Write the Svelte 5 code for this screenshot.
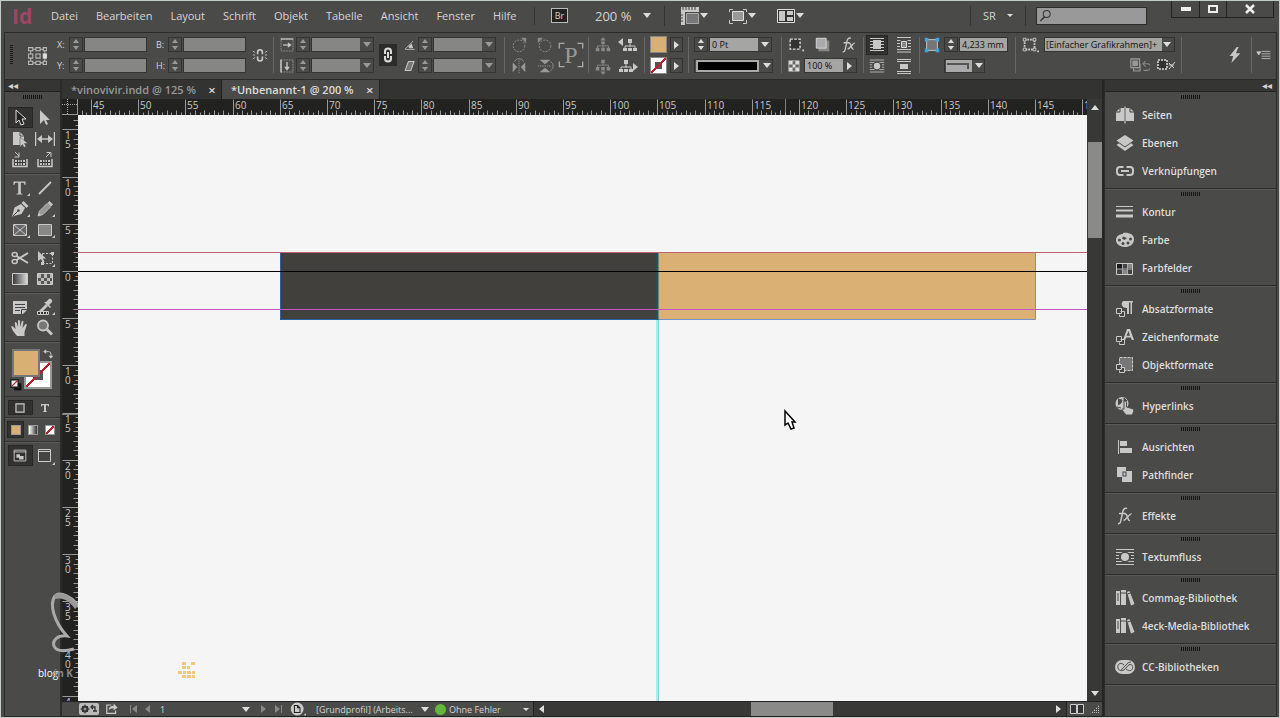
<script>
    const menus = ['Datei', 'Bearbeiten', 'Layout', 'Schrift', 'Objekt', 'Tabelle', 'Ansicht', 'Fenster', 'Hilfe'];

    const documents = [
        {name: '*vinovivir.indd @ 125 %', active: false},
        {name: '*Unbenannt-1 @ 200 %', active: true}
    ];

    const toolGroups = [
        [
            ['select', 'Auswahl'], ['direct', 'Direktauswahl'],
            ['page', 'Seite'], ['gap', 'Lücke'],
            ['collect', 'Inhaltsaufnahme'], ['place', 'Inhaltsplatzierung']
        ],
        [
            ['type', 'Text'], ['line', 'Linie'],
            ['pen', 'Zeichenstift'], ['pencil', 'Buntstift'],
            ['frame', 'Rechteckrahmen'], ['rect', 'Rechteck']
        ],
        [
            ['scissors', 'Schere'], ['transform', 'Frei transformieren'],
            ['gradient', 'Verlaufsfarbfeld'], ['feather', 'Weiche Verlaufskante']
        ],
        [
            ['note', 'Notiz'], ['dropper', 'Pipette'],
            ['hand', 'Hand'], ['zoom', 'Zoom']
        ]
    ];

    const panelGroups = [
        [['pages', 'Seiten'], ['layers', 'Ebenen'], ['links', 'Verknüpfungen']],
        [['stroke', 'Kontur'], ['palette', 'Farbe'], ['swatches', 'Farbfelder']],
        [['paragraph', 'Absatzformate'], ['character', 'Zeichenformate'], ['object', 'Objektformate']],
        [['hyperlink', 'Hyperlinks']],
        [['align', 'Ausrichten'], ['pathfinder', 'Pathfinder']],
        [['effects', 'Effekte']],
        [['textwrap', 'Textumfluss']],
        [['library', 'Commag-Bibliothek'], ['library', '4eck-Media-Bibliothek']],
        [['cloud', 'CC-Bibliotheken']]
    ];

    // Shapes are drawn on a 20 x 20 grid, one unit is one pixel
    const icons = {
        select: '<path d="M6 2v13l3-3 2 5 3-1-2-5h4z" fill="#222" stroke="#ddd"/>',
        direct: '<path d="M5 2v14l4-4 2 5 2-1-2-4h4z"/>',
        page: '<path d="M3 3h7l4 4v4l-4-4v9H3z"/><path d="M3 3h7v4h4v4l-3 5H3z"/><path d="M10 3v4h4" fill="none" stroke="#555"/><path d="M10 8v10l2.500-2.500 1.500 3 2-1-1.500-3H18z" stroke="#4a4a48" stroke-width=".5"/>',
        gap: '<path d="M0.500 3v14M19.500 3v14M4 10h12" fill="none" stroke="currentColor" stroke-width="1.500"/><path d="M2 10l5-4v8zM18 10l-5-4v8z"/>',
        collect: '<path d="M3 9v7.500h14V9" fill="none" stroke="currentColor" stroke-width="1.500"/><path d="M5 10h10v5H5z"/><path d="M5 12.500h10M7.500 10v5M10 10v5M12.500 10v5" stroke="#333"/><path d="M5 2l4 4M9 2.500V7H4.500" stroke="currentColor" fill="none"/>',
        place: '<path d="M3 9v7.500h14V9" fill="none" stroke="currentColor" stroke-width="1.500"/><path d="M5 10h10v5H5z"/><path d="M5 12.500h10M7.500 10v5M10 10v5M12.500 10v5" stroke="#333"/><path d="M11 7l4-4M11.500 2.500H16V7" stroke="currentColor" fill="none"/>',
        type: '<path d="M3.500 3.500h12V7h-.8c-.3-1.700-.9-2.300-2.500-2.300h-1.400v9.600c0 1.200.4 1.400 1.700 1.500v.7h-6v-.7c1.300-.1 1.700-.3 1.700-1.500V4.700H6.800c-1.600 0-2.200.6-2.500 2.300h-.8z"/><path d="M20 15v3h-3z"/>',
        typeBold: '<path d="M2 2h16v5h-1.500c-.4-1.800-1-2.500-3-2.500h-1.500v10.500c0 1.500.5 1.800 2.200 2V18H5.800v-1c1.700-.2 2.200-.5 2.200-2V4.500H6.500c-2 0-2.600.7-3 2.500H2z"/>',
        line: '<path d="M4 16L16 4" stroke="currentColor" stroke-width="1.800"/>',
        pen: '<path d="M2 17.500l2.500-9L11 5l4 4-3.500 6z"/><path d="M11.500 4l2-2 5 5-2 2z"/><path d="M3 17l5-5" stroke="#444"/><circle cx="8.500" cy="11.500" r="1.300" fill="#444"/><path d="M20 15v3h-3z"/>',
        pencil: '<path d="M3 17l1.500-5L12 4.500l3.500 3.500L8 15.500z" fill="#999" stroke="#bbb"/><path d="M12.500 4l2-2 3.500 3.500-2 2zM3 17l1-3 2 2z"/><path d="M20 15v3h-3z"/>',
        frame: '<path d="M3.500 4.500h13v11h-13zM4 5l12 10M16 5L4 15" fill="#666" stroke="currentColor"/><path d="M20 15v3h-3z"/>',
        rect: '<path d="M3.500 4.500h13v11h-13z" fill="#888" stroke="currentColor"/><path d="M20 15v3h-3z"/>',
        scissors: '<path d="M18 5L6.500 12M18 15L6.500 8" stroke="currentColor" stroke-width="2"/><ellipse cx="4.700" cy="6.500" rx="2.500" ry="2" fill="none" stroke="currentColor" stroke-width="1.500"/><ellipse cx="4.700" cy="13.500" rx="2.500" ry="2" fill="none" stroke="currentColor" stroke-width="1.500"/>',
        transform: '<path d="M7.500 5.500h10v10h-10z" fill="none" stroke="currentColor" stroke-dasharray="2 1.500"/><path d="M16 4h3v3h-3zM6 14h3v3H6z"/><path d="M3 3v10l3-2 2 4 1.500-1L8 10.500h3z"/><path d="M20 16v3h-3z"/>',
        gradient: '<defs><linearGradient id="g1"><stop stop-color="#333"/><stop offset="1" stop-color="#ddd"/></linearGradient></defs><path d="M2.500 4.500h15v11h-15z" fill="url(#g1)" stroke="#ccc"/>',
        feather: '<path d="M2.500 4.500h15v11h-15z" fill="#555" stroke="#ccc"/><path d="M3 5h3v4H3zM9 5h3v4H9zM15 5h2v4h-2zM6 9h3v3H6zM12 9h3v3h-3zM3 12h3v3H3zM9 12h3v3H9zM15 12h2v3h-2z" fill="#bbb"/>',
        note: '<path d="M3 4h14v9l-4 4H3z"/><path d="M5 7.500h10M5 10.500h10M5 13.500h5M11.500 17v-4.500H17" stroke="#444" fill="none"/>',
        dropper: '<path d="M4 14l7-7 2 2-7 7H4z"/><path d="M9 5l6 6 1-1-2-2 3-3c1-1-1-4-3-3l-3 3z"/><path d="M2.500 14.500h11v3h-11zM5.500 14v4M8.500 14v4M11.500 14v4" fill="#333" stroke="#ccc"/><path d="M20 15v3h-3z"/>',
        hand: '<path d="M7 18l-4-5-1.800-4c0-1 1.300-1.300 2-.3L5.500 11 4.800 5c0-1.200 1.500-1.200 1.800-.2L8 9V3c0-1.300 1.800-1.300 2 0v6l1.700-5.500c.4-1.200 1.900-.8 1.700.4L12.500 10l2.600-3.600c.8-1 2-.3 1.600.8L14.500 14v4z"/>',
        zoom: '<circle cx="8" cy="7.500" r="5" fill="#777" stroke="currentColor" stroke-width="1.800"/><path d="M12 11.500l5 5" stroke="currentColor" stroke-width="3"/>',

        pages: '<path d="M1 7l4-4h4v13H1zM11 3h4l4 4v9h-8z"/><path d="M1 7h4V3M15 3v4h4" fill="none" stroke="#444"/><path d="M10 1.500v17" stroke="currentColor" stroke-width="1.200"/>',
        layers: '<path d="M10 2l8.500 5.500-8.500 6-8.500-6z"/><path d="M1.500 12L4 10.300l6 4.200 6-4.200 2.500 1.700-8.500 6z"/>',
        links: '<path d="M8.500 6H5a3 3 0 0 0-3 3v2a3 3 0 0 0 3 3h3.500M11.500 6H15a3 3 0 0 1 3 3v2a3 3 0 0 1-3 3h-3.500M6 10h8" fill="none" stroke="currentColor" stroke-width="2"/>',
        stroke: '<path d="M1 4h17v1H1zM1 7.500h17v2H1zM1 12.500h17v3H1z"/>',
        palette: '<path d="M1 10C1 6 5 4 8 4V3c5-1 11 1 11 6 0 6-5 8-9 8-5 0-9-3-9-7z"/><g fill="#4a4a48"><circle cx="4.500" cy="10" r="1.500"/><circle cx="8" cy="13.500" r="1.500"/><circle cx="13" cy="13" r="1.500"/><circle cx="15.500" cy="9" r="1.500"/><path d="M8 6.500l4 1.500-2.500 2-2.500-1.500z"/></g>',
        swatches: '<path d="M1.500 5.500h16v11h-16z" fill="#444" stroke="#ccc"/><path d="M2 6h5v5H2z" fill="#1d1a1c"/><path d="M8 12h4v4H8zM13 6h4v4h-4z" fill="#888"/><path d="M7.500 6v10M12.500 6v10M2 11h15" stroke="#aaa"/>',
        paragraph: '<path d="M9 2h9v1.500h-1V15h-1.500V3.500H14V15h-2V9C5 9 6 2 9 2z"/><path d="M5.500 12.500h4v5h-5v-2M1.500 9.500h5v5h-5z" fill="#444" stroke="#ccc"/>',
        character: '<path d="M8 13l4-11h3l4 11h-2.300l-.8-2.500h-4.800L10.300 13zm3.600-4.200h3.300L13.500 4z" fill-rule="evenodd"/><path d="M5.500 12.500h4v5h-5v-2M1.500 9.500h5v5h-5z" fill="#444" stroke="#ccc"/>',
        object: '<path d="M4.500 2.500h13v13h-13z" fill="#777" stroke="#ccc" stroke-dasharray="3 1"/><path d="M5.500 12.500h4v5h-5v-2M1.500 9.500h5v5h-5z" fill="#444" stroke="#ccc"/>',
        hyperlink: '<circle cx="7" cy="7.500" r="6.500"/><path d="M3 3l4 1-1 3-3 2M9 2l3 3-3 2zM2 11l4 1" stroke="#4a4a48" fill="#4a4a48"/><path d="M10 5c1.300 0 1.500.7 1.500 1.500V11l5.500 1.500c1.500.5 2 1.500 1.500 3L17.500 19H11l-4-5c0-1.500 1-1.500 2-.7V6.500C9 5.700 9.200 5 10 5z" stroke="#4a4a48"/>',
        align: '<path d="M3 3h1v14H3zM5 4h7v5H5zM5 11h12v5H5z"/>',
        pathfinder: '<path d="M2 2h9v4h6v11H7v-5H2z"/><path d="M7.500 6.500h4v5h-4z" fill="#444"/><path d="M8.500 7.500h2v3h-2z"/>',
        effects: '<path d="M12 2.500C9 1.500 8 4 7.500 7L6 14c-.5 3-1.500 4-3 3.500M4 7.500h6.500M9.500 8c3-1.500 3 7.500 5.500 6.500M16.500 8c-2-1-4.500 5.500-8 6.500" fill="none" stroke="currentColor" stroke-width="1.500"/>',
        textwrap: '<path d="M1 2.500h18M1 5.500h18M1 8.500h3M1 11.500h3M16 8.500h3M16 11.500h3M1 14.500h18M1 17.500h18" stroke="currentColor"/><circle cx="10" cy="10" r="5.500" fill="#4a4a48"/><circle cx="10" cy="10" r="4"/>',
        library: '<path d="M1 3h4v14H1zM6 2h5v15H6zM12 4l2.500-1L19.500 16l-3.500 1.500z"/><path d="M3 5v8M6 5h5M12.500 6l3-1" stroke="#4a4a48"/>',
        cloud: '<rect x="0" y="3" width="20" height="14" rx="7" ry="7"/><path d="M9 8C5 4 2 8 3 11c1 4 6 3 8 0l2-2.500c3-2.500 5.500 0 4.500 3-1 3-4.500 2.500-6.500.5M6 13l6-6c1-1.500 2.500-2 4-2" fill="none" stroke="#4a4a48"/>',

        reference: '<path d="M1.500 2.500h4v3h-4zM8.500 2.500h4v3h-4zM15.500 2.500h3v3h-3zM1.500 8.500h4v4h-4zM8.500 8.500h4v4h-4zM1.500 15.500h4v3h-4zM8.500 15.500h4v3h-4zM15.500 15.500h3v3h-3zM6 4h2M13 4h2M6 17h2M13 17h2M3.500 6v2M3.500 13v2M17 6v2M17 13v2" fill="none" stroke="#bbb"/><path d="M15 8h4v5h-4z" fill="#ddd"/>',
        unlink: '<path d="M7 9V6.500a3 3 0 0 1 6 0V9M7 12v2.500a3 3 0 0 0 6 0V12" fill="none" stroke="#ccc" stroke-width="2"/><path d="M1 5l3 2M1 10h3M1 15l3-2M19 5l-3 2M19 10h-3M19 15l-3-2" stroke="#ccc"/>',
        link: '<path d="M7 9V6.500a3 3 0 0 1 6 0V9M7 11v2.500a3 3 0 0 0 6 0V11M10 7v6" fill="none" stroke="#ddd" stroke-width="2"/>',
        scaleX: '<path d="M2.500 2.500h15v15h-15z" fill="none" stroke="#bbb" stroke-dasharray="1 1"/><path d="M2 2.500h16M5 10h7" stroke="#ddd" stroke-width="1.500"/><path d="M11 6.500l5 3.500-5 3.500z"/>',
        scaleY: '<path d="M2.500 2.500h15v15h-15z" fill="none" stroke="#bbb" stroke-dasharray="1 1"/><path d="M2.500 2v16M10 5v7" stroke="#ddd" stroke-width="1.500"/><path d="M6.500 11l3.500 5 3.500-5z"/>',
        angle: '<path d="M4 15.500h12M4 15L14 5" stroke="currentColor"/><path d="M8 12l4-4 2 6H9z"/>',
        shear: '<path d="M8 4.500h7l-4 11H4z" fill="#777" stroke="currentColor" stroke-width="1.300"/>',
        rotateCw: '<circle cx="10" cy="11" r="6.500" fill="none" stroke="#999" stroke-dasharray="2 1.500"/><path d="M12 2h6v6z" fill="#888"/>',
        rotateCcw: '<circle cx="10" cy="11" r="6.500" fill="none" stroke="#999" stroke-dasharray="2 1.500"/><path d="M8 2H2v6z" fill="#888"/>',
        flipH: '<path d="M10 4v14" stroke="#999" stroke-dasharray="1.500 1"/><path d="M3 6l5 5-5 6zM17 6l-5 5 5 6z" fill="#999"/><path d="M5 5c2-4 8-4 10 0" fill="none" stroke="#999"/>',
        flipV: '<path d="M2 10h14" stroke="#999" stroke-dasharray="1.500 1"/><path d="M4 3h12l-6 5zM4 17h12l-6-5z" fill="#999"/><path d="M16 5c4 2 4 8 0 10" fill="none" stroke="#999"/>',
        paragraphBox: '<path d="M1 5V1h4M15 1h4v4M1 15v4h4M15 19h4v-4" fill="none" stroke="#aaa"/>',
        treeUp: '<path d="M10 5v6M4 14v-3h12v3M10 11v3" fill="none" stroke="#888"/><path d="M7 5l3-4 3 4zM8 6h4v3H8zM2 13h4v4H2zM8 13h4v4H8zM14 13h4v4h-4z" fill="#888"/>',
        treeDown: '<path d="M10 5v5M4 12V9h12v3" fill="none" stroke="#888"/><path d="M7 16l3 4 3-4zM8 3h4v4H8zM2 11h4v4H2zM8 11h4v4H8zM14 11h4v4h-4z" fill="#888"/>',
        treeLeft: '<path d="M12 6v6M7 14v-3h10v3" fill="none" stroke="currentColor"/><path d="M0 7l5-4v8zM10 4h4v4h-4zM5 13h4v3H5zM10 13h4v3h-4zM15 13h4v3h-4z"/>',
        treeRight: '<path d="M8 6v6M3 14v-3h10v3" fill="none" stroke="currentColor"/><path d="M20 11l-5-4v8zM6 4h4v4H6zM1 13h4v3H1zM6 13h4v3H6zM11 13h4v3h-4z"/>',
        crop: '<path d="M3.500 3.500h11v11h-11z" fill="#333" stroke="#ddd" stroke-dasharray="3 1.500" stroke-width="1.500"/><path d="M17 15h2v2h-2z"/>',
        shadow: '<path d="M5 5h12v12H5z" fill="#888"/><path d="M2.500 2.500h11v11h-11z" fill="#aaa" stroke="#ddd"/>',
        opacity: '<path d="M2.500 2.500h15v15h-15z" fill="#666" stroke="#ccc"/><path d="M3 3h5v5H3zM12 3h5v5h-5zM8 8h4v4H8zM3 12h5v5H3zM12 12h5v5h-5z" fill="#ddd"/>',
        wrapNone: '<path d="M3 3.500h14M3 6.500h14M3 9.500h14M3 12.500h14M3 15.500h14" stroke="currentColor"/><path d="M6 5h8v9H6z"/>',
        wrapBox: '<path d="M3 2.500h14M3 5.500h14M3 8.500h3M3 11.500h3M14 8.500h3M14 11.500h3M3 14.500h14M3 17h14" stroke="currentColor"/><path d="M6.500 5h7v9h-7z" fill="#4a4a48"/><path d="M7.500 6.500h5v6h-5z" fill="#888" stroke="#ddd"/>',
        wrapJump: '<path d="M3 3.500h14M3 5.500h14M3 15.500h14M3 17.500h14" stroke="currentColor"/><path d="M6 8h8v5H6z"/>',
        corners: '<path d="M4 4h12v12H4z" fill="#777" stroke="#ccc"/><path d="M2 2h4v4H2zM14 2h4v4h-4zM2 14h4v4H2zM14 14h4v4h-4z" fill="#3fa3df"/>',
        styles: '<path d="M4 4h11v11H4z" fill="none" stroke="#ccc" stroke-width="2" stroke-dasharray="2 1"/><path d="M2.500 2.500h3v3h-3zM13.500 2.500h3v3h-3zM2.500 13.500h3v3h-3zM13.500 13.500h3v3h-3z" fill="#4a4a48" stroke="#ccc"/><path d="M18 16h2v2h-2z"/>',
        clear: '<path d="M2.500 3.500h8v8h-8zM5 12v2.500h6V8" fill="#555" stroke="#999"/><path d="M4 5h5v5H4z" fill="#999"/><path d="M14 8h3.500a2 2 0 0 1 0 6H14M16 5.500L13.500 8l2.500 2.500" fill="none" stroke="#888"/>',
        redefine: '<path d="M2 5h9v9H2z" fill="#333" stroke="#ddd" stroke-width="1.500" stroke-dasharray="2 1"/><path d="M13 14l6-7M13 8l5 5M13 10h5" stroke="#ccc"/>',
        bolt: '<path d="M12 1L4 11h4l-2 8 10-11h-5l3-7z"/>',
        flyout: '<path d="M1 6h5l-2.500 4zM7 5.500h11M7 8.500h11M7 11.500h11M7 14.500h11" stroke="currentColor" stroke-width="1"/>',
        rulers: '<path d="M1 1h18v5H1zM1 6h4v13H1z"/><path d="M3 1v3M6 1v3M9 1v3M12 1v3M15 1v3M1 9h2M1 12h2M1 15h2" stroke="#444"/><path d="M6.500 7.500h12v10h-12z" fill="#777" stroke="#aaa"/>',
        screen: '<path d="M1.500 6V3.500H5M15 3.500h3.500V6M1.500 14v3.500H5M15 17.500h3.500V14" stroke="currentColor" fill="none"/><path d="M4.500 5.500h11v9h-11z" fill="#999" stroke="#ddd"/>',
        arrange: '<path d="M1.500 3.500h17v13h-17z" fill="#333" stroke="#ddd"/><path d="M3 5h6v10H3zM11 5h6v4h-6zM11 11h6v4h-6z"/>',
        preflight: '<rect x="0" y="4" width="20" height="12" rx="2" fill="#bbb"/><circle cx="6" cy="10" r="2.500" fill="none" stroke="#333" stroke-width="2"/><path d="M6 5.500v9M1.500 10h9M3 7l6 6M9 7l-6 6" stroke="#333"/><circle cx="6" cy="10" r="1" fill="#bbb"/><path d="M12 8h4v4M14 6l-2 2 2 2M18 12h-4" fill="none" stroke="#333" stroke-width="1.300"/>',
        share: '<path d="M9 5H3.500v10.500h11V12" fill="none" stroke="#ccc" stroke-width="1.500"/><path d="M6 12c0-5 3-6 6-6V3l5 5-5 4V9c-3 0-5 1-6 3z"/>',
        file: '<circle cx="9" cy="10" r="8" fill="#ccc"/><path d="M5.500 5.500h4l3 3v6h-7zM9.500 5.500v3h3" fill="#ccc" stroke="#222" stroke-width="1.300"/><path d="M18 16h2v2h-2z"/>',
        spread: '<path d="M3.500 5.500h6v9h-6zM10.500 5.500h6v9h-6z" fill="#333" stroke="#ccc"/>',
        swap: '<path d="M5 6h6a4 4 0 0 1 4 4v4" fill="none" stroke="currentColor" stroke-width="1.500"/><path d="M2 6l5-4v8zM11 13h8l-4 5z"/>',
        defaults: '<path d="M7 7h12v12H7z" fill="#111"/><path d="M11 11h4v4h-4z" fill="#4a4a48"/><path d="M1.500 1.500h12v12h-12z" fill="#eee" stroke="#111" stroke-width="2"/><path d="M3 12l9-9" stroke="#b9202b" stroke-width="2"/>',
        preview: '<path d="M3.500 3.500h13v12h-13z" fill="#333" stroke="#ccc"/><path d="M3 5.500h14" stroke="#ccc"/><path d="M6 8h4v4H6zM9 10h5v4H9z"/>',
        screenMode: '<path d="M3.500 3.500h12v12h-12z" fill="#444" stroke="#ccc"/><path d="M3 5.500h13" stroke="#ccc"/><path d="M20 16v3h-3z"/>',
        container: '<path d="M5.500 5.500h9v9h-9z" fill="#444" stroke="#ccc" stroke-width="1.300"/>',
        search: '<circle cx="11" cy="7" r="5" fill="none" stroke="#333" stroke-width="1.500"/><path d="M8 11l-6 6" stroke="#333" stroke-width="2"/>'
    };

    // Distance between two millimetres on the rulers at 200 %
    const step = 9.44;

    const makeTicks = (from, to, offset) => {
        const ticks = [];
        for (let half = from * 2; half <= to * 2; half++) {
            const value = half / 2;
            ticks.push({
                value,
                at: Math.round(offset + value * step),
                major: value % 5 === 0,
                whole: value % 1 === 0
            });
        }
        return ticks;
    }

    const columnTicks = makeTicks(44, 151, 13 - 45 * step);
    const rowTicks = makeTicks(-16, 46, 156);

    let activeTool = 'select';
    let stylePreset = '[Einfacher Grafikrahmen]+';
    let pageNumber = '1';

    const handleTool = (name) => {
        activeTool = name;
    }
</script>

{#snippet icon(name, size = 18)}
    <svg class="icon" width={size} height={size} viewBox="0 0 20 20" fill="currentColor" aria-hidden="true">{@html icons[name]}</svg>
{/snippet}

{#snippet spinner()}
    <span class="spinner">
        <button type="button" aria-label="Erhöhen"><i class="up"></i></button>
        <button type="button" aria-label="Verringern"><i class="down"></i></button>
    </span>
{/snippet}

{#snippet combo(label)}
    <span class="combo off">
        <input aria-label={label} />
        <button type="button" aria-label="{label} auswählen"><i class="down"></i></button>
    </span>
{/snippet}

<div class="app">
    <header class="menubar">
        <span class="logo">Id</span>
        <nav>
            {#each menus as menu}
                <button type="button">{menu}</button>
            {/each}
        </nav>
        <div class="apptools">
            <button type="button" class="bridge">Br</button>
            <button type="button" class="zoomlevel">200 % <i class="down"></i></button>
        </div>
        <div class="views">
            <button type="button" aria-label="Anzeigeoptionen">{@render icon('rulers', 20)}<i class="down"></i></button>
            <button type="button" aria-label="Bildschirmmodus">{@render icon('screen', 20)}<i class="down"></i></button>
            <button type="button" aria-label="Dokumente anordnen">{@render icon('arrange', 20)}<i class="down"></i></button>
        </div>
        <button type="button" class="workspace-name">SR <i class="down small"></i></button>
        <label class="search">
            {@render icon('search', 14)}
            <input type="search" aria-label="Suche" />
        </label>
        <div class="window-buttons">
            <button type="button" aria-label="Minimieren"><i class="min"></i></button>
            <button type="button" aria-label="Maximieren"><i class="max"></i></button>
            <button type="button" aria-label="Schließen">
                <svg width="12" height="10" viewBox="0 0 12 10"><path d="M2 1l8 8M10 1L2 9" stroke="#eee" stroke-width="2.500" /></svg>
            </button>
        </div>
    </header>

    <section class="control">
        <div class="group position">
            <i class="vgrip tall"></i>
            <span class="tall refpoint">{@render icon('reference', 21)}</span>
            <label for="x">X:</label>{@render spinner()}<input id="x" class="off" />
            <label for="b">B:</label>{@render spinner()}<input id="b" class="off" />
            <span class="tall unlinked">{@render icon('unlink', 16)}</span>
            <label for="y">Y:</label>{@render spinner()}<input id="y" class="off" />
            <label for="h">H:</label>{@render spinner()}<input id="h" class="off" />
        </div>
        <div class="group scale">
            {@render icon('scaleX', 16)}{@render spinner()}{@render combo('Skalierung X')}
            <button type="button" class="tall chain" aria-label="Proportionen beibehalten">{@render icon('link', 20)}</button>
            {@render icon('angle', 16)}{@render spinner()}{@render combo('Drehwinkel')}
            {@render icon('scaleY', 16)}{@render spinner()}{@render combo('Skalierung Y')}
            {@render icon('shear', 16)}{@render spinner()}{@render combo('Scherwinkel')}
        </div>
        <div class="group rotate">
            {@render icon('rotateCw')}{@render icon('rotateCcw')}
            <span class="tall letter">P{@render icon('paragraphBox', 26)}</span>
            {@render icon('flipH')}{@render icon('flipV')}
        </div>
        <div class="group tree">
            {@render icon('treeUp')}{@render icon('treeLeft', 20)}
            {@render icon('treeDown')}{@render icon('treeRight', 20)}
        </div>
        <div class="group paint">
            <i class="swatch tan"></i><button type="button" class="step" aria-label="Fläche"><i class="right"></i></button>
            <i class="swatch none hollow"></i><button type="button" class="step" aria-label="Kontur"><i class="right"></i></button>
        </div>
        <div class="group weight">
            {@render spinner()}
            <span class="combo"><input aria-label="Konturstärke" value="0 Pt" /><button type="button" aria-label="Konturstärke auswählen"><i class="down"></i></button></span>
            <button type="button" class="linestyle" aria-label="Konturtyp"><b></b><i class="down"></i></button>
        </div>
        <div class="group effects">
            {@render icon('crop')}{@render icon('shadow')}{@render icon('effects')}
            <span class="opacity">
                {@render icon('opacity', 14)}
                <span class="combo"><input aria-label="Deckkraft" value="100 %" /><button type="button" aria-label="Deckkraft auswählen"><i class="right"></i></button></span>
            </span>
        </div>
        <div class="group wrap">
            <button type="button" class="pressed" aria-label="Kein Textumfluss">{@render icon('wrapNone', 20)}</button>{@render icon('wrapBox', 20)}
            <span class="center">{@render icon('textwrap', 16)}</span>{@render icon('wrapJump', 20)}
        </div>
        <div class="group corner">
            {@render icon('corners')}{@render spinner()}<input aria-label="Eckengröße" value="4,233 mm" />
            <button type="button" class="cornerstyle" aria-label="Eckenform"><b></b><i class="down"></i></button>
        </div>
        <div class="group style">
            {@render icon('styles')}
            <span class="combo">
                <select bind:value={stylePreset} aria-label="Objektformat">
                    <option>[Einfacher Grafikrahmen]+</option>
                    <option>[Einfacher Textrahmen]</option>
                </select>
                <i class="down"></i>
            </span>
            <span class="style-actions">{@render icon('clear', 22)}{@render icon('redefine', 20)}</span>
        </div>
        <div class="group quick">{@render icon('bolt', 18)}</div>
        <button type="button" class="flyout" aria-label="Bedienfeldmenü">{@render icon('flyout', 16)}</button>
    </section>

    <main>
        <aside class="toolbox">
            <div class="collapse">◂◂</div>
            <i class="grip"></i>
            {#each toolGroups as group}
                <div class="tools">
                    {#each group as [name, label]}
                        <button type="button" class:pressed={activeTool === name} aria-label={label} on:click={() => handleTool(name)}>
                            {@render icon(name, 20)}
                        </button>
                    {/each}
                </div>
            {/each}
            <div class="colors">
                <i class="stroke-color"></i>
                <i class="fill-color"></i>
                <button type="button" class="swap" aria-label="Fläche und Kontur austauschen">{@render icon('swap', 12)}</button>
                <button type="button" class="default" aria-label="Standardfläche und -kontur">{@render icon('defaults', 12)}</button>
            </div>
            <div class="tools low">
                <button type="button" class="pressed" aria-label="Formatierung wirkt sich auf Rahmen aus">{@render icon('container')}</button>
                <button type="button" aria-label="Formatierung wirkt sich auf Text aus">{@render icon('typeBold', 10)}</button>
            </div>
            <div class="tools three">
                <button type="button" class="pressed" aria-label="Farbe anwenden"><i class="chip tan"></i></button>
                <button type="button" aria-label="Verlauf anwenden"><i class="chip fade"></i></button>
                <button type="button" aria-label="Keine anwenden"><i class="chip none"></i></button>
            </div>
            <div class="tools modes">
                <button type="button" class="pressed" aria-label="Normal">{@render icon('preview')}</button>
                <button type="button" aria-label="Vorschau">{@render icon('screenMode', 20)}</button>
            </div>
        </aside>

        <section class="document">
            <div class="tabs">
                {#each documents as doc}
                    <div class="tab" class:active={doc.active}>
                        <button type="button">{doc.name}</button>
                        <button type="button" class="close" aria-label="Schließen">×</button>
                    </div>
                {/each}
            </div>

            <div class="view">
                <svg class="origin" width="16" height="16"><path d="M0 5.500h16M5.500 0v16" stroke="#aaa" stroke-dasharray="1 1" /><path d="M15.500 0v16M0 15.500h16" stroke="#999" /></svg>
                <svg class="ruler across">
                    {#each columnTicks as tick}
                        <line x1={tick.at} x2={tick.at} y1={tick.major ? 0 : tick.whole ? 11 : 13} y2="16" />
                        {#if tick.major}
                            <text x={tick.at + 2} y="10">{tick.value}</text>
                        {/if}
                    {/each}
                    <line class="marker" x1="707" x2="707" y1="0" y2="16" />
                </svg>
                <svg class="ruler down-ruler">
                    {#each rowTicks as tick}
                        <line y1={tick.at} y2={tick.at} x1={tick.major ? 0 : tick.whole ? 11 : 13} x2="16" />
                        {#if tick.major}
                            <text y={tick.at + 1}>
                                {#each String(Math.abs(tick.value)) as digit}<tspan x="3" dy="9">{digit}</tspan>{/each}
                            </text>
                        {/if}
                    {/each}
                    <line class="marker" x1="0" x2="16" y1="299" y2="299" />
                </svg>

                <svg class="canvas">
                    <rect x="202" y="137" width="378" height="68" fill="#42403c" />
                    <rect x="580" y="137" width="377" height="68" fill="#dab074" />
                    <path d="M202.500 137v67.500H580" fill="none" stroke="#2c5fa5" />
                    <path d="M580 204.500h377.500V137" fill="none" stroke="#7093c8" />
                    <path d="M579.500 137v68" stroke="#15596a" stroke-width="2" />
                    <rect x="578" y="205" width="3" height="100%" fill="#a4eeee" />
                    <rect x="580" y="205" width="1" height="100%" fill="#84d2d4" />
                    <rect y="137" width="100%" height="1" fill="#bd6270" />
                    <rect y="156" width="100%" height="1" fill="#000" />
                    <rect y="194" width="100%" height="1" fill="#c455c4" />
                    <g fill="#efc980">
                        <path d="M104 547h4v3h-4zM113 547h4v3h-4zM104 551h4v3h-4zM109 551h3v3h-3zM100 556h4v3h-4zM105 556h3v3h-3zM109 556h4v3h-4zM114 556h3v3h-3zM104 560h4v3h-4zM109 560h4v3h-4zM114 560h3v3h-3z" />
                    </g>
                    <path class="pointer" d="M707 296v14l3-2 3 6 3-1-2-6h3z" fill="#fff" stroke="#000" stroke-width="1.500" />
                </svg>

                <div class="vscroll">
                    <i class="up"></i>
                    <b></b>
                    <i class="down"></i>
                </div>
            </div>

            <footer>
                {@render icon('preflight', 20)}
                {@render icon('share', 16)}
                <button type="button" class="dim" aria-label="Erste Seite"><i class="bar"></i><i class="left"></i></button>
                <button type="button" class="dim" aria-label="Vorherige Seite"><i class="left"></i></button>
                <span class="pagefield">
                    <input bind:value={pageNumber} aria-label="Seite" />
                    <i class="down"></i>
                </span>
                <button type="button" class="dim" aria-label="Nächste Seite"><i class="right"></i></button>
                <button type="button" class="dim" aria-label="Letzte Seite"><i class="right"></i><i class="bar"></i></button>
                {@render icon('file', 16)}
                <button type="button" class="profile"><span>[Grundprofil] (Arbeits...</span><i class="down"></i></button>
                <button type="button" class="errors"><i class="dot"></i><span>Ohne Fehler</span><i class="down small"></i></button>
                <div class="hscroll">
                    <i class="left"></i>
                    <b></b>
                    <i class="right"></i>
                </div>
                <span class="corner-end">{@render icon('spread', 20)}<i class="resize"></i></span>
            </footer>

            <div class="watermark">
                <svg width="40" height="76" viewBox="0 0 40 76"><path d="M41 17C35 7 22 1 17 6c-6 8-1 26 12 40C20 45 14 50 16 56c2 5 9 6 20 3" fill="none" stroke="#aaa" stroke-width="3" /><path d="M16 5c8-4 17 1 24 11l-3 3C31 10 24 7 17 9z" fill="#999" /></svg>
                <span class="blog">blog</span><span class="town">in K</span>
            </div>
        </section>

        <aside class="dock">
            <div class="collapse end">◂◂</div>
            {#each panelGroups as group}
                <div class="panels">
                    <i class="grip"></i>
                    {#each group as [name, label]}
                        <button type="button">{@render icon(name, 20)}<span>{label}</span></button>
                    {/each}
                </div>
            {/each}
        </aside>
    </main>
</div>

<style>
    :global(body) {
        background: #4a4a48;
    }

    .app {
        box-sizing: border-box;
        height: 100vh;
        display: flex;
        flex-direction: column;
        padding: 0 2px 0 3px;
        border: 1px solid #c4ccc8;
        background: #4a4a48;
        color: #d4d4d4;
        font-family: "Open Sans", "Noto Sans", sans-serif;
        font-size: 11px;
        overflow: hidden;
    }

    .app :global(*) {
        box-sizing: border-box;
    }

    button, input, select {
        font: inherit;
        color: inherit;
        background: none;
        border: 0;
        padding: 0;
        margin: 0;
        min-width: 0;
        border-radius: 0;
        appearance: none;
        outline: 0;
    }

    button {
        display: flex;
        align-items: center;
        justify-content: center;
        white-space: nowrap;
    }

    .icon {
        display: block;
        flex: none;
        color: #c8c8c8;
    }

    /* Triangles */
    .up, .down, .left, .right {
        flex: none;
        width: 0;
        height: 0;
        border: 4px solid transparent;
    }

    .up {
        border-top: 0;
        border-bottom: 5px solid #ddd;
    }

    .down {
        border-bottom: 0;
        border-top: 5px solid #ddd;
    }

    .left {
        border-left: 0;
        border-right: 5px solid #ddd;
    }

    .right {
        border-right: 0;
        border-left: 5px solid #ddd;
    }

    .small {
        border-width: 3px 3px 0;
    }

    /* Menu bar */
    .menubar {
        flex: none;
        display: flex;
        align-items: center;
        height: 31px;
        padding: 0 0 2px 8px;
    }

    .logo {
        width: 39px;
        color: #9a4765;
        font-size: 21px;
        font-weight: 700;
        line-height: 28px;
    }

    nav {
        display: flex;
        gap: 18px;
        width: 483px;
    }

    .apptools {
        display: flex;
        align-items: center;
        gap: 27px;
        width: 130px;
        padding-left: 16px;
        border-left: 1px solid #333;
    }

    .bridge {
        width: 17px;
        height: 15px;
        border: 1px solid #bbb;
        background: #222;
        font-size: 9px;
    }

    .zoomlevel {
        gap: 12px;
        font-size: 13px;
    }

    .views {
        display: flex;
        flex: 1;
        gap: 20px;
        padding-left: 15px;
        border-left: 1px solid #333;
    }

    .workspace-name {
        gap: 11px;
        width: 56px;
        height: 20px;
        border: solid #333;
        border-width: 0 1px;
    }

    .search {
        display: flex;
        align-items: center;
        width: 111px;
        height: 18px;
        margin: 0 24px 0 10px;
        padding-left: 2px;
        border: 1px solid #2c2c2c;
        background: #999;
    }

    .search input {
        width: 90px;
    }

    .window-buttons {
        display: flex;
        align-self: flex-start;
        height: 17px;
        margin-right: 3px;
        border: 1px solid #222;
        border-top: 0;
    }

    .window-buttons button {
        width: 27px;
    }

    .window-buttons button + button {
        border-left: 1px solid #222;
    }

    .window-buttons button:last-child {
        width: 47px;
    }

    .min {
        width: 10px;
        height: 4px;
        background: #eee;
    }

    .max {
        width: 10px;
        height: 8px;
        border: 2px solid #eee;
    }

    /* Control bar */
    .control {
        flex: none;
        display: flex;
        align-items: center;
        height: 48px;
        padding: 0 0 2px 4px;
        border: 1px solid #2b2b2a;
        font-size: 9px;
    }

    .group {
        display: grid;
        grid-template-rows: 15px 15px;
        gap: 6px 0;
        align-items: center;
        justify-items: start;
        height: 36px;
        border-right: 1px solid #686866;
    }

    .tall {
        grid-row: 1 / 3;
    }

    .position {
        grid-template-columns: 18px 30px 12px 15px 72px 12px 15px 69px 15px;
        padding-right: 6px;
    }

    .refpoint {
        grid-column: 2;
    }

    .unlinked {
        grid-column: 9;
    }

    .scale {
        grid-template-columns: 17px 15px 68px 23px 16px 15px 64px;
        padding: 0 7px 0 5px;
    }

    .rotate {
        grid-template-columns: 26px 22px 26px;
        padding: 0 4px 0 5px;
    }

    .tree {
        grid-template-columns: 24px 19px;
        padding: 0 7px 0 5px;
    }

    .paint {
        grid-template-columns: 20px 14px;
        padding: 0 4px 0 5px;
    }

    .weight {
        grid-template-columns: 15px 65px;
        padding: 0 7px 0 5px;
    }

    .effects {
        grid-template-columns: 27px 26px 17px;
        padding: 0 6px 0 5px;
    }

    .wrap {
        grid-template-columns: 28px 17px;
        padding: 0 8px 0 2px;
    }

    .corner {
        grid-template-columns: 21px 15px 49px;
        padding: 0 7px 0 3px;
    }

    .style {
        grid-template-columns: 23px 132px;
        padding: 0 5px;
    }

    .quick {
        flex: 1;
        grid-template-rows: 36px;
        justify-items: end;
        padding-right: 7px;
    }

    .flyout {
        width: 24px;
    }

    .group input, .combo {
        width: 63px;
        height: 15px;
        border: 1px solid #333;
        background: #a5a5a3;
        color: #111;
    }

    .group input {
        padding: 0 2px;
    }

    .group .off, .off input {
        background: #868684;
    }

    .combo {
        display: flex;
        align-items: center;
    }

    .combo input, .combo select {
        flex: 1;
        width: 0;
        height: 13px;
        border: 0;
    }

    .combo select {
        padding-left: 1px;
    }

    .combo button {
        width: 13px;
        height: 13px;
        background: #4a4a48;
    }

    .style .combo {
        width: 131px;
        background: linear-gradient(90deg, transparent 117px, #4a4a48 117px) #a5a5a3;
    }

    .combo > .down {
        margin: 0 3px;
    }

    .combo.off .down {
        border-top-color: #999;
    }

    .spinner {
        display: grid;
        width: 14px;
        height: 15px;
        border: 1px solid #333;
    }

    .spinner .up, .spinner .down {
        border-width: 0 3px 4px;
        border-bottom-color: #999;
    }

    .spinner .down {
        border-width: 4px 3px 0;
        border-top-color: #999;
    }

    .weight .spinner .up, .corner .spinner .up {
        border-bottom-color: #ddd;
    }

    .weight .spinner .down, .corner .spinner .down {
        border-top-color: #ddd;
    }

    .vgrip {
        grid-column: 1;
        width: 3px;
        height: 20px;
        margin-left: 1px;
        background: repeating-linear-gradient(#1a1a1a 0 1px, transparent 1px 2px);
    }

    .chain {
        grid-column: 4;
        width: 18px;
        height: 22px;
        background: #2c2c2b;
    }

    .letter {
        grid-column: 3;
        position: relative;
        width: 26px;
        height: 26px;
        color: #999;
        font: 24px/26px "Liberation Serif", serif;
        text-align: center;
    }

    .letter .icon {
        position: absolute;
        inset: 0;
    }

    .swatch {
        width: 17px;
        height: 17px;
        border: 1px solid #888;
    }

    .tan {
        background: #d9b074;
    }

    .none {
        background: linear-gradient(135deg, transparent 43%, #b9202b 43% 57%, transparent 57%) #fff;
    }

    .hollow {
        background: linear-gradient(135deg, transparent 45%, #b9202b 45% 55%, transparent 55%), linear-gradient(#555, #555) center / 7px 7px no-repeat #fff;
    }

    .step {
        width: 13px;
        height: 15px;
        border: 1px solid #333;
    }

    .linestyle {
        grid-column: 1 / 3;
        gap: 4px;
        width: 79px;
        height: 14px;
        border: 1px solid #333;
    }

    .linestyle b {
        width: 63px;
        height: 12px;
        border: 2px solid #aaa;
        background: #000;
    }

    .opacity {
        grid-column: 1 / 4;
        display: flex;
        align-items: center;
        gap: 3px;
    }

    .opacity .combo {
        width: 53px;
    }

    .pressed {
        background: #323231;
        box-shadow: inset 0 0 0 1px #272726;
    }

    .wrap .pressed, .wrap .center {
        display: flex;
        justify-content: center;
        width: 22px;
        height: 20px;
        align-items: center;
    }

    .corner input {
        width: 49px;
    }

    .cornerstyle {
        grid-column: 2 / 4;
        gap: 3px;
        width: 41px;
        height: 14px;
        border: 1px solid #333;
    }

    .cornerstyle b {
        width: 26px;
        height: 12px;
        border: 3px solid #aaa;
        border-left-width: 1px;
        background: linear-gradient(#aaa, #aaa) left bottom / 20px 4px no-repeat #555;
    }

    .style-actions {
        grid-column: 2;
        justify-self: end;
        display: flex;
        gap: 6px;
    }

    /* Work area */
    main {
        flex: 1;
        min-height: 0;
        display: flex;
    }

    .toolbox {
        flex: none;
        width: 58px;
        border: solid #2b2b2a;
        border-width: 0 2px 1px 1px;
    }

    .collapse {
        height: 12px;
        padding-left: 3px;
        border-bottom: 1px solid #222;
        background: #353534;
        font: 10px/11px "DejaVu Sans", sans-serif;
    }

    .end {
        text-align: right;
        padding-right: 4px;
    }

    .grip {
        display: block;
        width: 19px;
        height: 4px;
        margin: 3px auto 0;
        background: repeating-linear-gradient(90deg, #151515 0 1px, transparent 1px 2px);
    }

    .toolbox > .grip {
        margin-bottom: 8px;
    }

    .tools {
        display: grid;
        grid-template-columns: 25px 25px;
        grid-auto-rows: 21px;
        justify-content: center;
        padding: 3px 0;
        border-bottom: 1px solid #333;
        box-shadow: 0 1px #5a5a58;
    }

    .toolbox .grip + .tools {
        padding-top: 0;
    }

    .colors {
        position: relative;
        height: 55px;
        border-bottom: 1px solid #333;
    }

    .fill-color, .stroke-color {
        position: absolute;
        top: 7px;
        left: 7px;
        width: 28px;
        height: 28px;
        border: 2px solid #777;
        background: #d9b074;
    }

    .stroke-color {
        top: 19px;
        left: 19px;
        border-color: #999;
        background: linear-gradient(135deg, transparent 46%, #b9202b 46% 54%, transparent 54%), linear-gradient(#555, #555) center / 10px 10px no-repeat #fff;
    }

    .swap {
        position: absolute;
        top: 6px;
        left: 37px;
    }

    .default {
        position: absolute;
        top: 37px;
        left: 5px;
    }

    .tools.low {
        grid-auto-rows: 15px;
        padding: 3px 0 2px;
    }

    .tools.three {
        grid-template-columns: 17px 17px 17px;
        grid-auto-rows: 17px;
        padding: 3px 0;
    }

    .chip {
        width: 10px;
        height: 10px;
        border: 1px solid #999;
    }

    .fade {
        background: linear-gradient(90deg, #fff, #333);
    }

    .tools.modes {
        padding-top: 3px;
        border: 0;
        box-shadow: none;
    }

    /* Document window */
    .document {
        position: relative;
        flex: 1;
        min-width: 0;
        display: flex;
        flex-direction: column;
        border-right: 2px solid #252525;
        border-bottom: 1px solid #222;
    }

    .tabs {
        flex: none;
        display: flex;
        height: 19px;
        background: #333332;
        font-weight: 600;
    }

    .tab {
        display: flex;
        align-items: center;
        gap: 11px;
        padding: 0 4px 0 9px;
        border-right: 1px solid #222;
        color: #999;
    }

    .active {
        background: #4a4a48;
        color: #ddd;
    }

    .close {
        width: 10px;
        color: #ddd;
        font-size: 13px;
    }

    .view {
        flex: 1;
        min-height: 0;
        display: grid;
        grid-template-columns: 16px 1fr 15px;
        grid-template-rows: 16px 1fr;
    }

    .view svg {
        display: block;
        overflow: hidden;
    }

    .origin, .ruler {
        background: #222221;
    }

    .across {
        width: 100%;
        height: 16px;
    }

    .down-ruler {
        grid-row: 2;
        width: 16px;
        height: 100%;
    }

    .ruler line {
        stroke: #999;
        stroke-width: 1;
        transform: translate(0.5px, 0.5px);
    }

    .ruler .marker {
        stroke: #ddd;
        stroke-dasharray: 1 1;
    }

    .ruler text {
        fill: #c8c8c8;
        font-size: 10px;
    }

    .canvas {
        grid-row: 2;
        grid-column: 2;
        width: 100%;
        height: 100%;
        background: #f5f5f5;
    }

    .vscroll {
        grid-row: 1 / 3;
        grid-column: 3;
        display: flex;
        flex-direction: column;
        align-items: center;
        padding: 6px 0 5px;
        background: #383837;
    }

    .vscroll b {
        width: 14px;
        height: 96px;
        margin: 32px 0 auto;
        background: #8a8a88;
    }

    footer {
        flex: none;
        display: flex;
        align-items: center;
        height: 15px;
        padding-left: 17px;
        border-top: 1px solid #222;
        font-size: 9px;
    }

    footer > .icon {
        margin-right: 5px;
    }

    .dim {
        width: 15px;
    }

    .dim .left {
        border-right-color: #888;
    }

    .dim .right {
        border-left-color: #888;
    }

    .bar {
        width: 1px;
        height: 8px;
        margin: 0 1px;
        background: #888;
    }

    .pagefield {
        display: flex;
        align-items: center;
        width: 101px;
        padding: 0 6px 0 5px;
    }

    .pagefield input {
        flex: 1;
        height: 12px;
    }

    .dim + .icon {
        margin: 0 10px 0 4px;
    }

    .profile {
        justify-content: space-between;
        width: 113px;
    }

    .errors {
        width: 104px;
        padding: 0 4px 0 6px;
    }

    .errors .down {
        margin-left: auto;
    }

    .dot {
        flex: none;
        width: 11px;
        height: 11px;
        margin-right: 3px;
        border-radius: 50%;
        background: #62b63a;
    }

    .hscroll {
        flex: 1;
        display: flex;
        align-items: center;
        height: 14px;
        padding: 0 5px;
        border: solid #222;
        border-width: 0 1px;
        background: #383837;
    }

    .hscroll b {
        width: 82px;
        height: 14px;
        margin: 0 auto 0 207px;
        background: #8a8a88;
    }

    .corner-end {
        display: flex;
        align-items: center;
        gap: 3px;
        width: 35px;
    }

    .resize {
        width: 10px;
        height: 10px;
        background: repeating-linear-gradient(transparent 0 1px, #4a4a48 1px 2px), repeating-linear-gradient(90deg, #bbb 0 1px, transparent 1px 2px);
        clip-path: polygon(100% 0, 100% 100%, 0 100%);
    }

    /* Lies over the rulers and the toolbox */
    .watermark {
        position: absolute;
        bottom: 22px;
        left: -24px;
        width: 40px;
        height: 104px;
        overflow: hidden;
        white-space: nowrap;
        font-size: 10px;
        line-height: 14px;
        pointer-events: none;
    }

    .watermark svg {
        display: block;
    }

    .blog {
        color: #fff;
    }

    .town {
        margin-left: -4px;
        color: #888;
        font-weight: 700;
    }

    /* Panel dock */
    .dock {
        flex: none;
        width: 173px;
        border: solid #2b2b2a;
        border-width: 0 1px 1px 1px;
    }

    .panels {
        padding-bottom: 3px;
        border-bottom: 1px solid #2b2b2a;
        box-shadow: 0 1px #5a5a58;
        color: #dedede;
        font-size: 10px;
        font-weight: 600;
    }

    .panels .grip {
        margin-bottom: 2px;
    }

    .panels button {
        justify-content: flex-start;
        gap: 7px;
        width: 100%;
        height: 28px;
        padding-left: 10px;
    }
</style>
